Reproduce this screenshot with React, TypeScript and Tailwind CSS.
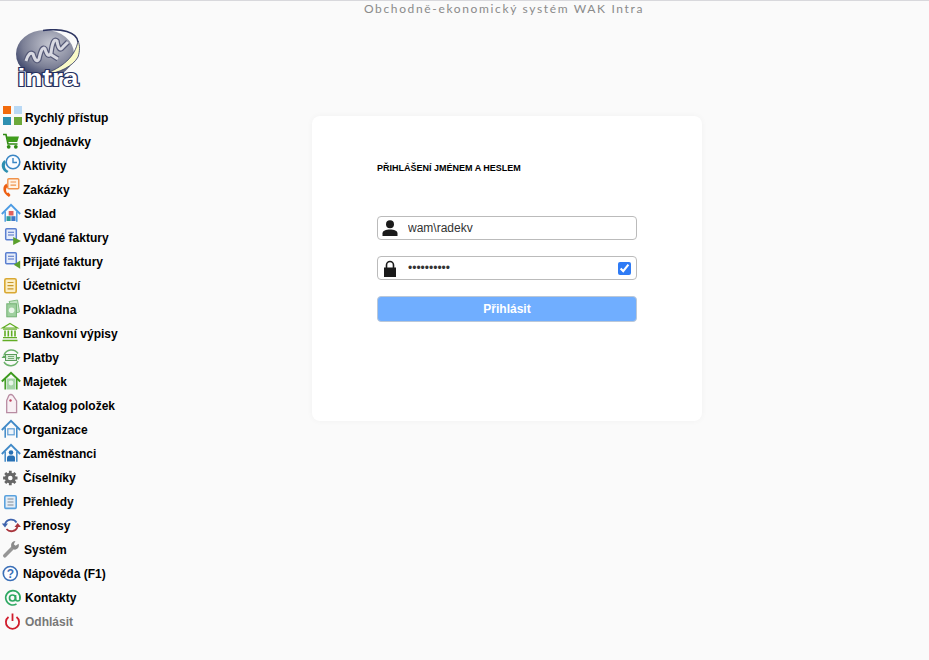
import type { ReactNode } from "react";

const base = "0 0 25 24";

function Ico({ children }: { children: ReactNode }) {
  return (
    <svg viewBox={base} width={25} height={24} className="absolute left-0 -top-px">
      {children}
    </svg>
  );
}

function House({ color, sw = 1.5 }: { color: string; sw?: number }) {
  return (
    <>
      <path d="M1.8 13 L11 3.8 L20.2 13" fill="none" stroke={color} strokeWidth={sw + 0.3} />
      <path d="M5.2 10.5 V20.8 M16.8 10.5 V20.8" fill="none" stroke={color} strokeWidth={sw} />
    </>
  );
}

function Doc() {
  return (
    <>
      <rect x="5.7" y="3.7" width="10.6" height="11" rx="1" fill="#e6edf9" stroke="#5a7fd0" strokeWidth="1.5" />
      <path d="M8 7.3h6M8 10h6" stroke="#4f6fc4" strokeWidth="1.1" />
    </>
  );
}

const menu: { label: string; slot: string; tone?: string; icon: ReactNode }[] = [
  {
    label: "Rychlý přístup",
    slot: "w-[25px]",
    icon: (
      <Ico>
        <rect x="3" y="1" width="8" height="8" fill="#f26a0c" />
        <rect x="14" y="1" width="8" height="8" fill="#b9d9f5" />
        <rect x="3" y="12" width="8" height="8" fill="#2e8fb0" />
        <rect x="14" y="12" width="8" height="8" fill="#6ca93a" />
      </Ico>
    ),
  },
  {
    label: "Objednávky",
    slot: "w-[23px]",
    icon: (
      <Ico>
        <path d="M3 5.5h3l2 9.5h9.5" fill="none" stroke="#2f8a12" strokeWidth="1.6" />
        <path d="M6.5 7.5H19L17.2 13H7.6Z" fill="#3f9c1c" />
        <circle cx="8.7" cy="17.8" r="1.9" fill="#2f8a12" />
        <circle cx="15.8" cy="17.8" r="1.9" fill="#2f8a12" />
      </Ico>
    ),
  },
  {
    label: "Aktivity",
    slot: "w-[23px]",
    icon: (
      <Ico>
        <circle cx="13" cy="9" r="6.8" fill="#fafcff" stroke="#3a86c4" strokeWidth="1.6" />
        <path d="M13 5v4.5h4" fill="none" stroke="#3a86c4" strokeWidth="1.4" />
        <path d="M4.5 7 C0 10.5 1 17 7 20 L8.5 18 C5 16.2 4 13 5.8 9.5Z" fill="#2d8fb0" />
      </Ico>
    ),
  },
  {
    label: "Zakázky",
    slot: "w-[23px]",
    icon: (
      <Ico>
        <rect x="7.8" y="1.8" width="11" height="10" rx="1" fill="#fff3e6" stroke="#f0924a" strokeWidth="1.4" />
        <path d="M10.5 5h5.6M10.5 8.2h5.6" stroke="#f0924a" strokeWidth="1.2" />
        <path d="M6.5 6.5 C2 9 2 16 9 20 L10.5 18 L8.5 15.5 L7 16 C5.8 14 5.8 12.5 6.5 11L7.8 10Z" fill="#ee5f12" />
      </Ico>
    ),
  },
  {
    label: "Sklad",
    slot: "w-[24px]",
    icon: (
      <Ico>
        <House color="#4c9be3" />
        <rect x="8.7" y="10" width="4.8" height="4.5" fill="#e2615c" />
        <rect x="6.5" y="15.2" width="4.2" height="4.8" fill="#2e9a9a" />
        <rect x="11.3" y="15.2" width="4.2" height="4.8" fill="#3f78c8" />
      </Ico>
    ),
  },
  {
    label: "Vydané faktury",
    slot: "w-[23px]",
    icon: (
      <Ico>
        <Doc />
        <path d="M13.2 12 L21 16 L13.2 20Z" fill="#5aa02c" />
      </Ico>
    ),
  },
  {
    label: "Přijaté faktury",
    slot: "w-[23px]",
    icon: (
      <Ico>
        <Doc />
        <path d="M20.2 11.5 V19.8 L13.8 15.7Z" fill="#5aa02c" />
      </Ico>
    ),
  },
  {
    label: "Účetnictví",
    slot: "w-[23px]",
    icon: (
      <Ico>
        <rect x="4.8" y="5.8" width="11.4" height="14" rx="1.5" fill="#fbeec6" stroke="#d9a832" strokeWidth="1.6" />
        <path d="M7.5 9.5h6M7.5 12.7h6M7.5 15.9h6" stroke="#c9982b" strokeWidth="1.2" />
      </Ico>
    ),
  },
  {
    label: "Pokladna",
    slot: "w-[23px]",
    icon: (
      <Ico>
        <path d="M9 4.5 L17.5 3 L19.5 15 L15 16Z" fill="#c4e4c4" stroke="#86c086" strokeWidth="1" />
        <rect x="6.8" y="6.8" width="9.6" height="13" fill="#9fd09f" stroke="#74b274" strokeWidth="1" />
        <circle cx="11.6" cy="13.3" r="2.8" fill="#eaf6ea" />
      </Ico>
    ),
  },
  {
    label: "Bankovní výpisy",
    slot: "w-[23px]",
    icon: (
      <Ico>
        <path d="M10 2.5 L17.5 7 H2.5Z" fill="none" stroke="#62ad24" strokeWidth="1.2" />
        <path d="M3 8.2h14" stroke="#62ad24" strokeWidth="1" />
        <path d="M5 9.5v6M8.3 9.5v6M11.7 9.5v6M15 9.5v6" stroke="#62ad24" strokeWidth="1.6" />
        <path d="M3 16.7h14M2.5 19.5h15" stroke="#62ad24" strokeWidth="1.3" />
      </Ico>
    ),
  },
  {
    label: "Platby",
    slot: "w-[23px]",
    icon: (
      <Ico>
        <path d="M4 10 A8 8 0 0 1 18 8.5" fill="none" stroke="#6cb26c" strokeWidth="1.5" />
        <path d="M18 16 A8 8 0 0 1 4 17" fill="none" stroke="#6cb26c" strokeWidth="1.5" />
        <rect x="5.5" y="9.5" width="11" height="6" fill="#d9edd9" stroke="#5a9c5a" strokeWidth="1" />
        <path d="M1.5 13 L4 10 L6.5 13Z M16 12 L20.5 12 L18.3 15Z" fill="#5fa95f" />
        <path d="M8 11.5h6M8 13.5h6" stroke="#5a9c5a" strokeWidth="0.8" />
      </Ico>
    ),
  },
  {
    label: "Majetek",
    slot: "w-[23px]",
    icon: (
      <Ico>
        <path d="M1.8 12.5 L11 3.8 L20.2 12.5" fill="none" stroke="#3c9a1e" strokeWidth="2" />
        <path d="M5.2 10 V20.5 M16.8 10 V20.5" fill="none" stroke="#3c9a1e" strokeWidth="1.5" />
        <rect x="6.5" y="9.5" width="9" height="11" fill="#a5d4a5" />
        <circle cx="11" cy="14" r="2.4" fill="#e6f4e6" />
      </Ico>
    ),
  },
  {
    label: "Katalog položek",
    slot: "w-[23px]",
    icon: (
      <Ico>
        <path d="M6.7 7.5 L9 2.2 Q11 0.6 13 2.6 L16.6 8 V19.6 H6.7Z" fill="#f8f0f4" stroke="#b88ca2" strokeWidth="1.3" />
        <circle cx="10.5" cy="7.5" r="1.2" fill="#c0455f" />
      </Ico>
    ),
  },
  {
    label: "Organizace",
    slot: "w-[23px]",
    icon: (
      <Ico>
        <House color="#4089c7" />
        <rect x="7.8" y="11.8" width="6.4" height="6" fill="#eef4fa" stroke="#5f9fd6" strokeWidth="1.2" />
      </Ico>
    ),
  },
  {
    label: "Zaměstnanci",
    slot: "w-[23px]",
    icon: (
      <Ico>
        <House color="#4089c7" />
        <circle cx="11" cy="11.5" r="2.3" fill="#2770b4" />
        <path d="M7 20.5 V17 Q7 14.5 9.5 14.5 H12.5 Q15 14.5 15 17 V20.5Z" fill="#2770b4" />
      </Ico>
    ),
  },
  {
    label: "Číselníky",
    slot: "w-[23px]",
    icon: (
      <Ico>
        <circle cx="10.3" cy="13" r="5.4" fill="#666666" />
        <path
          d="M10.3 5.8v14.4M3.1 13h14.4M5.2 7.9l10.2 10.2M15.4 7.9L5.2 18.1"
          stroke="#666666"
          strokeWidth="2.8"
        />
        <circle cx="10.3" cy="13" r="2.3" fill="#fafafa" />
      </Ico>
    ),
  },
  {
    label: "Přehledy",
    slot: "w-[23px]",
    icon: (
      <Ico>
        <rect x="4.8" y="6.8" width="11.4" height="12.6" rx="1.2" fill="#e4edf6" stroke="#5aa2de" strokeWidth="1.6" />
        <path d="M7.5 10h6M7.5 13h6M7.5 16h6" stroke="#7f8a94" strokeWidth="1.2" />
      </Ico>
    ),
  },
  {
    label: "Přenosy",
    slot: "w-[23px]",
    icon: (
      <Ico>
        <path d="M5 11 A6.5 6.5 0 0 1 16.5 9.5" fill="none" stroke="#3c62ac" strokeWidth="1.8" />
        <path d="M1.8 10.5 H8 L5 14.5Z" fill="#3c62ac" />
        <path d="M17.5 14 A6.5 6.5 0 0 1 6.5 16" fill="none" stroke="#a8343c" strokeWidth="1.8" />
        <path d="M14.5 14 H21 L17.7 10Z" fill="#a8343c" />
      </Ico>
    ),
  },
  {
    label: "Systém",
    slot: "w-[24px]",
    icon: (
      <Ico>
        <path d="M4.8 18.8 L13.5 10" stroke="#969696" strokeWidth="3.6" strokeLinecap="round" />
        <path d="M18.6 6.8 L15.6 8.8 L13.8 7.2 L15.4 4 C12 4 10.2 7.2 11.6 10.4 L14 12.6 C17.6 13 19.6 10 18.6 6.8Z" fill="#8a8a8a" />
      </Ico>
    ),
  },
  {
    label: "Nápověda (F1)",
    slot: "w-[23px]",
    icon: (
      <Ico>
        <circle cx="10.3" cy="12.5" r="7" fill="#fdfdff" stroke="#3a6fb7" strokeWidth="1.6" />
        <text x="10.3" y="16.7" textAnchor="middle" fontSize="12" fontWeight="700" fontFamily="Liberation Sans" fill="#3a6fb7">
          ?
        </text>
      </Ico>
    ),
  },
  {
    label: "Kontakty",
    slot: "w-[25px]",
    icon: (
      <Ico>
        <circle cx="12.5" cy="13" r="3" fill="none" stroke="#2ea862" strokeWidth="1.7" />
        <path d="M15.5 10v4.2a2.3 2.3 0 0 0 4.4 0.3 A7.2 7.2 0 1 0 16.5 19" fill="none" stroke="#2ea862" strokeWidth="1.7" />
      </Ico>
    ),
  },
  {
    label: "Odhlásit",
    slot: "w-[25px]",
    tone: "text-[#777777]",
    icon: (
      <Ico>
        <path d="M8.5 8 A6.6 6.6 0 1 0 16.5 8" fill="none" stroke="#d01c2c" strokeWidth="1.8" />
        <path d="M12.5 4.5V12" stroke="#d01c2c" strokeWidth="1.8" />
      </Ico>
    ),
  },
];

function Logo() {
  return (
    <svg viewBox="0 0 70 62" width={70} height={62} className="ml-[13px]">
      <defs>
        <radialGradient id="globe" cx="0.6" cy="0.3" r="0.8">
          <stop offset="0" stopColor="#c6c8d2" />
          <stop offset="0.6" stopColor="#7c8096" />
          <stop offset="1" stopColor="#26305c" />
        </radialGradient>
      </defs>
      <ellipse cx="32" cy="25" rx="29" ry="24" fill="url(#globe)" />
      <path d="M30 1.5 C48 -1 64 3 65 13" fill="none" stroke="#2c3460" strokeWidth="1.6" />
      <path
        d="M13 32 Q16 22 20 25 Q23 35 26 30 Q29 16 32 20 Q35 30 38 24 Q40 8 44 12 Q46 24 50 18 L55 13 M37 25 L45 30"
        fill="none"
        stroke="#565a78"
        strokeWidth="5.4"
      />
      <path
        d="M13 32 Q16 22 20 25 Q23 35 26 30 Q29 16 32 20 Q35 30 38 24 Q40 8 44 12 Q46 24 50 18 L55 13 M37 25 L45 30"
        fill="none"
        stroke="#d8d9e2"
        strokeWidth="3"
      />
      <path d="M65 12 C62 28 50 38 30 46 C47 44 60 37 65 28 C67 22 67 16 65 12Z" fill="#fafac8" stroke="#2c3460" strokeWidth="0.8" />
      <text
        x="4.5"
        y="57"
        fontFamily="Liberation Sans"
        fontWeight="700"
        fontSize="23"
        textLength="61"
        lengthAdjust="spacingAndGlyphs"
        fill="#ffffff"
        stroke="#26305e"
        strokeWidth="2.2"
        paintOrder="stroke"
      >
        intra
      </text>
    </svg>
  );
}

export default function App() {
  return (
    <div className="min-h-screen bg-[#fafafa] border-t border-[#d8d8dc] font-['Liberation_Sans',sans-serif]">
      <div className="h-[15px] pl-[79px] text-center text-[12px] leading-[15px] tracking-[1.65px] text-[#8a8a8a] font-['Lato',sans-serif]">
        Obchodně-ekonomický systém WAK Intra
      </div>
      <div className="flex">
        <aside className="w-[312px] shrink-0 pt-[13px]">
          <Logo />
          <nav className="mt-[15px]">
            {menu.map((m) => (
              <div key={m.label} className="relative flex h-6 items-center">
                {m.icon}
                <span className={`${m.slot} shrink-0`} />
                <span className={`text-[12px] font-bold ${m.tone ?? "text-black"}`}>{m.label}</span>
              </div>
            ))}
          </nav>
        </aside>
        <main className="mt-[100px] h-[305px] w-[390px] rounded-lg bg-white px-[65px] pt-[46px] shadow-[0_0_6px_rgba(0,0,0,0.04)]">
          <h1 className="h-3 text-[9px] leading-3 font-bold text-black">PŘIHLÁŠENÍ JMÉNEM A HESLEM</h1>
          <div className="mt-[42px] flex h-6 items-center rounded border border-[#bbbbbb] bg-white">
            <span className="flex w-[30px] shrink-0 justify-center">
              <svg viewBox="0 0 16 16" width={16} height={16} className="-ml-[6px]">
                <circle cx="8" cy="4.3" r="4" fill="#1a1a1a" />
                <path d="M0.5 16 V13.5 C0.5 10.5 4 9.5 8 9.5 C12 9.5 15.5 10.5 15.5 13.5 V16Z" fill="#1a1a1a" />
              </svg>
            </span>
            <input defaultValue="wam\radekv" className="min-w-0 flex-1 bg-transparent text-[12px] text-[#333333] outline-none" />
          </div>
          <div className="mt-4 flex h-6 items-center rounded border border-[#bbbbbb] bg-white pr-[5px]">
            <span className="flex w-[30px] shrink-0 justify-center">
              <svg viewBox="0 0 14 17" width={14} height={17} className="-ml-[6px]">
                <path d="M3.5 8 V5 a3.5 3.5 0 0 1 7 0 V8" fill="none" stroke="#1a1a1a" strokeWidth="1.6" />
                <rect x="1" y="7.5" width="12" height="9.5" fill="#1a1a1a" />
              </svg>
            </span>
            <input
              type="password"
              defaultValue="wamheslo12"
              className="min-w-0 flex-1 bg-transparent text-[12px] text-[#333333] outline-none"
            />
            <input type="checkbox" defaultChecked className="h-[13px] w-[13px] accent-[#2f7bf5]" />
          </div>
          <button className="mt-4 h-[26px] w-full rounded border border-[#bbc8d8] bg-[#70aeff] text-[12px] font-bold text-white">
            Přihlásit
          </button>
        </main>
      </div>
    </div>
  );
}
